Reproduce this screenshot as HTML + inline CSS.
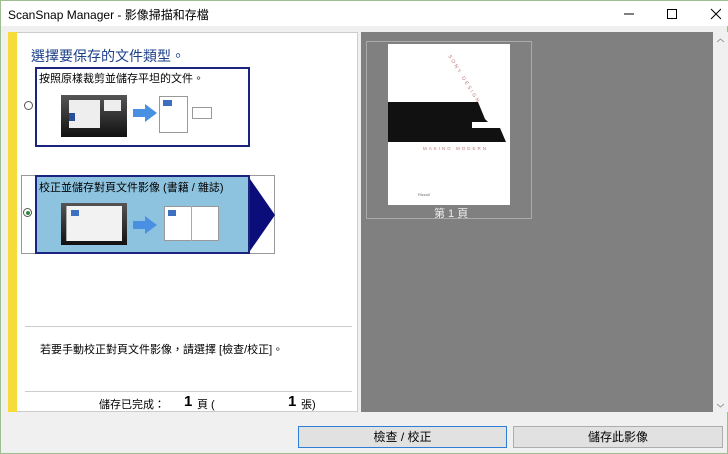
<!DOCTYPE html>
<html><head><meta charset="utf-8">
<style>
*{margin:0;padding:0;box-sizing:border-box}
body{width:728px;height:454px;background:#f0f0f0;font-family:"Liberation Sans","Noto Sans CJK TC",sans-serif;position:relative;overflow:hidden;border:1px solid #9dbf8f}
.abs{position:absolute}
.title{left:0;top:0;width:728px;height:25px;background:#fff;font-size:12px;color:#000}
.left{left:7px;top:31px;width:350px;height:380px;background:#fff;border:1px solid #ccc}
.yellow{left:7px;top:31px;width:9px;height:380px;background:#f6dc3a}
.gray{left:360px;top:31px;width:352px;height:380px;background:#808080}
.sb{left:712px;top:31px;width:15px;height:380px;background:#f0f0f0}
.t{font-size:12px;color:#000;white-space:nowrap}
.scan{background:linear-gradient(#555,#111)}
.doc{background:#fff;border:1px solid #999}
.btn{height:22px;top:425px;background:#e1e1e1;border:1px solid #adadad;font-size:12px;text-align:center;line-height:20px}
</style></head><body>
<div class="abs title"><span class="abs" style="left:7px;top:5px">ScanSnap Manager - 影像掃描和存檔</span>
<svg class="abs" style="left:620px;top:6px" width="100" height="14"><line x1="3" y1="7" x2="13" y2="7" stroke="#000"/><rect x="46.5" y="2.5" width="9" height="9" fill="none" stroke="#000"/><path d="M90 2 L100 12 M100 2 L90 12" stroke="#000"/></svg></div>
<div class="abs left"></div>
<div class="abs yellow"></div>
<div class="abs t" style="left:30px;top:45px;font-size:14px;color:#1c3f8a">選擇要保存的文件類型。</div>
<div class="abs" style="left:34px;top:66px;width:215px;height:80px;border:2px solid #1a237e;background:#fff"></div>
<div class="abs t" style="left:38px;top:69px;font-size:11px">按照原樣裁剪並儲存平坦的文件。</div>
<div class="abs" style="left:23px;top:100px;width:9px;height:9px;border:1px solid #555;border-radius:50%;background:#fff"></div>
<div class="abs scan" style="left:60px;top:94px;width:66px;height:42px"></div>
<div class="abs" style="left:68px;top:99px;width:31px;height:28px;background:#eee"></div>
<div class="abs" style="left:68px;top:112px;width:6px;height:8px;background:#2a4f9a"></div>
<div class="abs" style="left:103px;top:99px;width:17px;height:11px;background:#eee"></div>
<svg class="abs" style="left:132px;top:103px" width="24" height="18"><path d="M0 5h12V0l12 9-12 9v-5H0z" fill="#4a90e2"/></svg>
<div class="abs doc" style="left:158px;top:95px;width:29px;height:37px"><div style="margin:3px;width:9px;height:6px;background:#3c6fc0"></div></div>
<div class="abs doc" style="left:191px;top:106px;width:20px;height:12px"></div>
<div class="abs" style="left:20px;top:174px;width:254px;height:79px;border:1px solid #999;background:#fff"></div>
<div class="abs" style="left:34px;top:174px;width:215px;height:79px;border:2px solid #1a237e;background:#8ec3df"></div>
<svg class="abs" style="left:249px;top:178px" width="25" height="72"><path d="M0 0L25 36L0 72z" fill="#0b0d7a"/></svg>
<div class="abs t" style="left:38px;top:178px;font-size:11px">校正並儲存對頁文件影像 (書籍 / 雜誌)</div>
<div class="abs" style="left:22px;top:207px;width:9px;height:9px;border:1px solid #555;border-radius:50%;background:#fff"><div style="margin:1.5px;width:4px;height:4px;border-radius:50%;background:#2e8b3c"></div></div>
<div class="abs scan" style="left:60px;top:202px;width:66px;height:42px"></div>
<div class="abs" style="left:65px;top:205px;width:56px;height:35px;background:#f2f2f2;border-left:1px solid #aaa"><div style="margin:4px;width:8px;height:6px;background:#3c6fc0"></div></div>
<svg class="abs" style="left:132px;top:215px" width="24" height="18"><path d="M0 5h12V0l12 9-12 9v-5H0z" fill="#4a90e2"/></svg>
<div class="abs doc" style="left:163px;top:205px;width:55px;height:35px"><div style="margin:3px;width:8px;height:6px;background:#3c6fc0"></div></div>
<div class="abs" style="left:190px;top:205px;width:1px;height:35px;background:#aaa"></div>
<div class="abs" style="left:24px;top:325px;width:327px;height:1px;background:#ccc"></div>
<div class="abs t" style="left:39px;top:340px;font-size:11px">若要手動校正對頁文件影像，請選擇 [檢查/校正]。</div>
<div class="abs" style="left:24px;top:390px;width:327px;height:1px;background:#ccc"></div>
<div class="abs t" style="left:98px;top:395px;font-size:11px">儲存已完成：</div>
<div class="abs t" style="left:183px;top:392px;font-size:15px;font-weight:bold">1</div>
<div class="abs t" style="left:196px;top:395px;font-size:11px">頁 (</div>
<div class="abs t" style="left:287px;top:392px;font-size:15px;font-weight:bold">1</div>
<div class="abs t" style="left:300px;top:395px;font-size:11px">張)</div>
<div class="abs gray"></div>
<div class="abs" style="left:365px;top:40px;width:166px;height:178px;border:1px solid #aaa"></div>
<div class="abs" style="left:387px;top:43px;width:122px;height:161px;background:#fff;overflow:hidden">
<svg width="122" height="161"><path d="M0 58 L90 58 L97 75 L100 78 L84 78 L84 84 L112 84 L118 98 L0 98z" fill="#111"/>
<text x="35" y="106" font-size="4.5" fill="#b77" font-family="Liberation Sans" letter-spacing="2">MAKING MODERN</text>
<text x="60" y="12" font-size="5" fill="#b77" font-family="Liberation Sans" letter-spacing="2" transform="rotate(58 60 12)">SONY DESIGN</text>
<text x="30" y="152" font-size="4" fill="#666">Rizzoli</text></svg></div>
<div class="abs t" style="left:433px;top:204px;font-size:11px;color:#eee">第 1 頁</div>
<div class="abs sb"><svg class="abs" style="left:3px;top:5px" width="9" height="380"><path d="M1 5l3.5-3 3.5 3" fill="none" stroke="#999"/><path d="M1 367l3.5 3 3.5-3" fill="none" stroke="#999"/></svg></div>
<div class="abs btn" style="left:297px;width:209px;border-color:#2c7ed6">檢查 / 校正</div>
<div class="abs btn" style="left:512px;width:210px">儲存此影像</div>
</body></html>
